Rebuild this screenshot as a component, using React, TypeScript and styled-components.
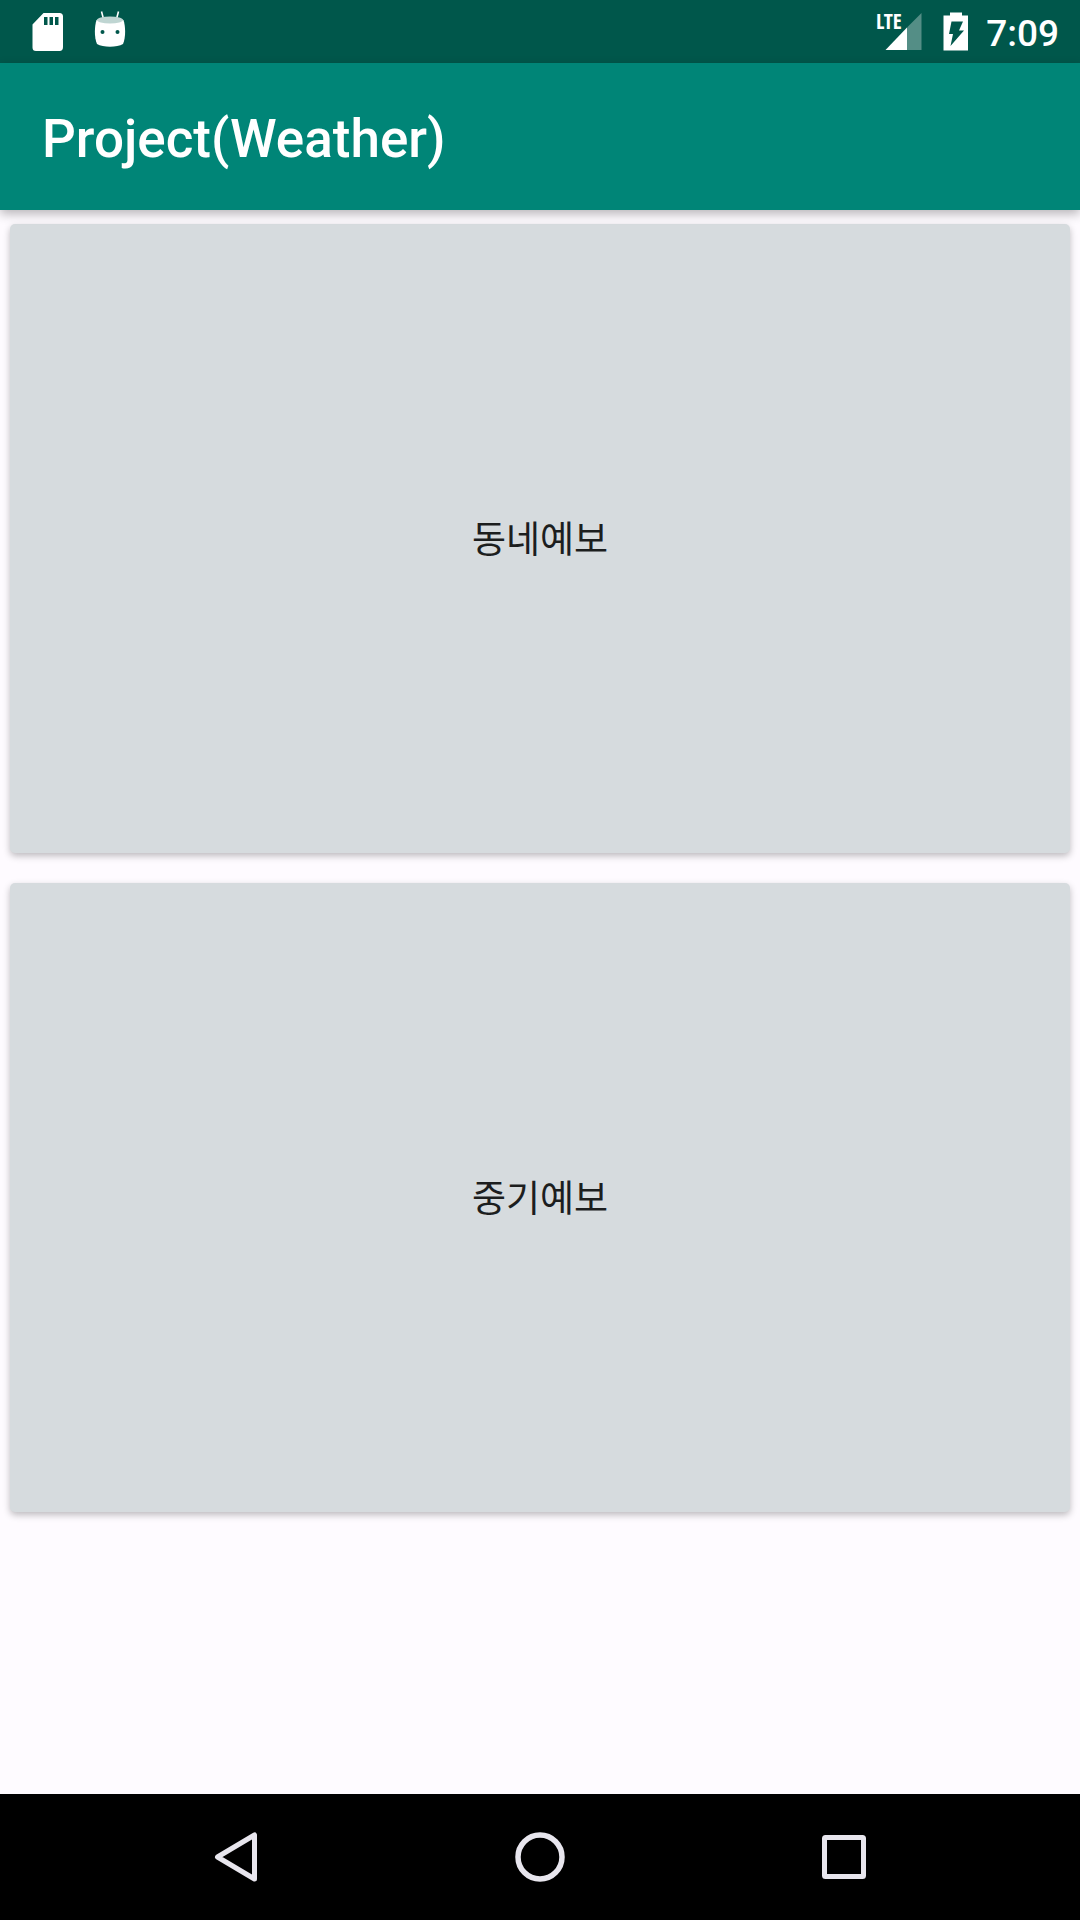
import React from "react";
import styled, { createGlobalStyle } from "styled-components";

const GlobalStyle = createGlobalStyle`
  *, *::before, *::after { box-sizing: border-box; }
  body {
    margin: 0;
    background: #fefbff;
    font-family: Roboto, "Noto Sans CJK KR", sans-serif;
  }
  button {
    font-family: inherit;
    border: 0;
    padding: 0;
    cursor: pointer;
  }
`;

const Screen = styled.div`
  display: flex;
  flex-direction: column;
  min-height: 100vh;
`;

const StatusBar = styled.div`
  display: flex;
  justify-content: space-between;
  align-items: center;
  height: 63px;
  padding: 0 21px 0 32px;
  background: #00574b;
  color: #fff;
`;

const StatusGroup = styled.div<{ $gap: number }>`
  display: flex;
  align-items: center;
  gap: ${({ $gap }) => $gap}px;
`;

const StatusIcon = styled.svg`
  display: block;
  height: 56px;
  flex: none;
`;

const Clock = styled.time`
  font-size: 37px;
  line-height: 40px;
  font-weight: 500;
  padding-top: 4px;
`;

const AppBar = styled.header`
  position: relative;
  display: flex;
  align-items: center;
  height: 147px;
  padding: 4px 42px 0;
  background: #008577;
  color: #fff;
  box-shadow: 0 4px 10px rgba(0, 0, 0, 0.28);
`;

const Title = styled.h1`
  margin: 0;
  font-size: 53px;
  line-height: 64px;
  font-weight: 500;
`;

const Content = styled.main`
  display: flex;
  flex: 1;
  flex-direction: column;
  gap: 30px;
  padding: 14px 10px;
`;

const ForecastButton = styled.button`
  min-height: 629px;
  padding-top: 4px;
  border-radius: 5px;
  background: #d6dbde;
  color: #1c1e1e;
  font-size: 37px;
  line-height: 48px;
  box-shadow: 0 3px 7px rgba(0, 0, 0, 0.26);
`;

const NavBar = styled.nav`
  display: grid;
  grid-template-columns: repeat(3, 1fr);
  height: 126px;
  padding: 0 84px;
  background: #000;
`;

const NavButton = styled.button`
  display: flex;
  align-items: center;
  justify-content: center;
  background: transparent;
  color: #e8e6ee;
`;

const NavIcon = styled.svg`
  width: 54px;
  height: 54px;
  fill: none;
  stroke: currentColor;
  stroke-linejoin: round;
`;

const LteLabel = styled.text`
  font-family: "Open Sans Condensed", "Roboto Condensed", "DejaVu Sans Condensed", sans-serif;
  font-size: 21px;
  font-weight: 700;
`;

function SdCardIcon() {
  return (
    <StatusIcon width="32" viewBox="0 -8 32 56" aria-hidden="true">
      <path
        fill="#fff"
        fillRule="evenodd"
        d="M11.5 1H27.5Q31 1 31 4.500V35Q31 39 27.500 39H4Q.5 39 .5 35.500V12.500ZM12 5V13H15.500V5ZM17.500 5V13H21V5ZM23 5V13H26.500V5Z"
      />
    </StatusIcon>
  );
}

function AndroidIcon() {
  return (
    <StatusIcon width="32" viewBox="0 -8 32 56" aria-hidden="true">
      <path d="M7.500 -.5L9.500 7M24.500 -.5L22.500 7" stroke="#fff" strokeWidth="1.600" />
      <path
        fill="#fff"
        d="M2.500 8C7 6 25 6 29.500 8C31.500 14 32 25 29 32C23 35.500 9 35.500 3 32C0 25 .5 14 2.500 8Z"
      />
      <ellipse cx="16" cy="8" rx="13" ry="3.500" fill="#bfd5d2" />
      <circle cx="8.500" cy="20" r="2" fill="#00574b" />
      <circle cx="23.500" cy="20" r="2" fill="#00574b" />
    </StatusIcon>
  );
}

function SignalIcon() {
  return (
    <StatusIcon width="52" viewBox="-2 -8 52 56" role="img" aria-label="LTE">
      <path fill="#fff" fillOpacity=".33" d="M45.500 1V38H31V15.500Z" />
      <path fill="#fff" d="M31 15.500V38H9.500Z" />
      <LteLabel x="0" y="17" fill="#fff">
        LTE
      </LteLabel>
    </StatusIcon>
  );
}

function BatteryIcon() {
  return (
    <StatusIcon width="26" viewBox="0 -8 26 56" aria-hidden="true">
      <path
        fill="#fff"
        fillRule="evenodd"
        d="M7 .5H19V3.500H25V38.500H.5V3.500H7ZM8.500 9.500L6 22H10L7.500 34L21 18.500H16L20 9.500Z"
      />
    </StatusIcon>
  );
}

const forecasts = ["동네예보", "중기예보"];

export default function App() {
  return (
    <>
      <GlobalStyle />
      <Screen>
        <StatusBar>
          <StatusGroup $gap={30}>
            <SdCardIcon />
            <AndroidIcon />
          </StatusGroup>
          <StatusGroup $gap={17}>
            <SignalIcon />
            <BatteryIcon />
            <Clock>7:09</Clock>
          </StatusGroup>
        </StatusBar>
        <AppBar>
          <Title>Project(Weather)</Title>
        </AppBar>
        <Content>
          {forecasts.map((name) => (
            <ForecastButton key={name} type="button">
              {name}
            </ForecastButton>
          ))}
        </Content>
        <NavBar>
          <NavButton type="button" aria-label="Back">
            <NavIcon viewBox="0 0 54 54" strokeWidth="5">
              <path d="M8.500 27L45.500 5V49Z" />
            </NavIcon>
          </NavButton>
          <NavButton type="button" aria-label="Home">
            <NavIcon viewBox="0 0 54 54" strokeWidth="5.500">
              <circle cx="27" cy="27" r="22" />
            </NavIcon>
          </NavButton>
          <NavButton type="button" aria-label="Recent apps">
            <NavIcon viewBox="0 0 54 54" strokeWidth="5">
              <rect x="7.500" y="7.500" width="39" height="39" rx="1" />
            </NavIcon>
          </NavButton>
        </NavBar>
      </Screen>
    </>
  );
}
